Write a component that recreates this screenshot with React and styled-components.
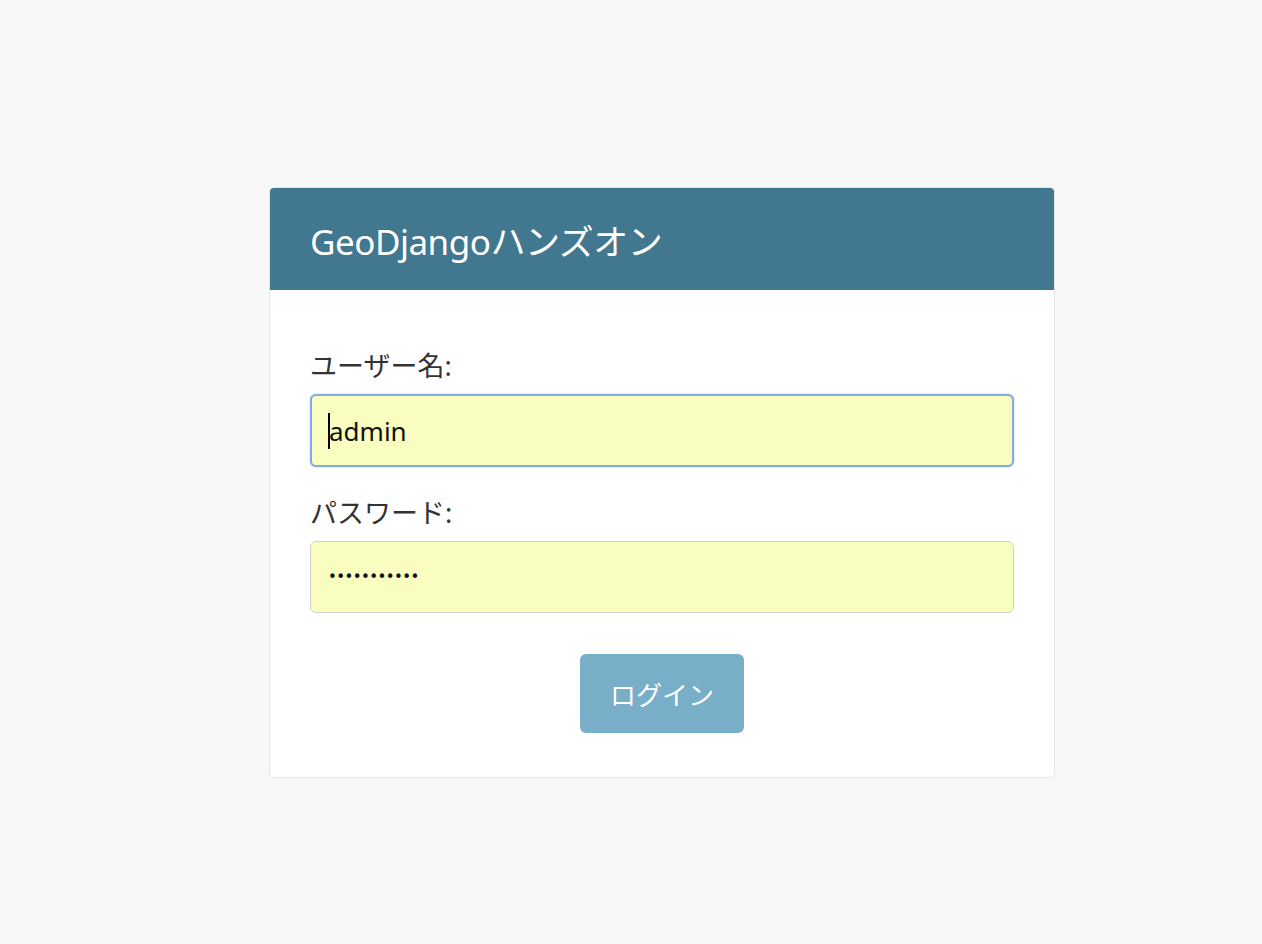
import React from "react";
import styled, { createGlobalStyle } from "styled-components";

const GlobalStyle = createGlobalStyle`
  html, body {
    margin: 0;
    padding: 0;
    background-color: #f8f8f8;
    font-family: "Noto Sans", "Noto Sans CJK JP", sans-serif;
    color: #333;
  }
`;

const Page = styled.div`
  min-height: 944px;
  padding-top: 187px;
  padding-left: 269px;
  box-sizing: border-box;
`;

const Card = styled.div`
  width: 786px;
  box-sizing: border-box;
  background-color: #fff;
  border: 1px solid #e4e4e4;
  border-radius: 5px;
  overflow: hidden;
`;

const Header = styled.div`
  height: 102px;
  display: flex;
  align-items: center;
  padding: 0 40px;
  background-color: #41778f;
  color: #fff;
`;

const Title = styled.h3`
  margin: 0;
  font-size: 35px;
  font-weight: 400;
  letter-spacing: -0.5px;
`;

const Body = styled.form`
  display: flex;
  flex-direction: column;
  padding: 58px 40px 44px;
`;

const Label = styled.label`
  font-size: 27px;
  line-height: 36px;
  color: #333;
  margin-bottom: 10px;
`;

const FieldWrap = styled.div`
  position: relative;
  margin-bottom: ${(p) => p.$gap}px;
`;

const Input = styled.input`
  display: block;
  width: 100%;
  height: ${(p) => (p.$focused ? 73 : 72)}px;
  box-sizing: border-box;
  padding: 0 17px;
  font-family: "Noto Sans", sans-serif;
  font-size: 26px;
  color: #111;
  background-color: #fafdc0;
  border: ${(p) => (p.$focused ? "2px solid #84a9e6" : "1px solid #cfcfcf")};
  border-radius: 6px;
  box-shadow: ${(p) => (p.$focused ? "0 0 2px #a8c4f0" : "none")};
  outline: none;
`;

const Dots = styled.div`
  position: absolute;
  left: 18px;
  top: 50%;
  transform: translateY(-50%);
  font-family: "DejaVu Sans", sans-serif;
  font-size: 15px;
  letter-spacing: -0.6px;
  color: #111;
  pointer-events: none;
`;

const Caret = styled.span`
  position: absolute;
  left: 18px;
  top: 19px;
  width: 2px;
  height: 36px;
  background-color: #000;
`;

const Actions = styled.div`
  display: flex;
  justify-content: center;
`;

const Button = styled.button`
  width: 164px;
  height: 79px;
  border: none;
  border-radius: 6px;
  background-color: #79aec8;
  color: #fff;
  font-family: "Noto Sans CJK JP", sans-serif;
  font-size: 26px;
  cursor: pointer;
`;

const App = () => {
  return (
    <Page>
      <GlobalStyle />
      <Card>
        <Header>
          <Title>GeoDjangoハンズオン</Title>
        </Header>
        <Body onSubmit={(e) => e.preventDefault()}>
          <Label>ユーザー名:</Label>
          <FieldWrap $gap={28}>
            <Input $focused type="text" defaultValue="admin" readOnly />
            <Caret />
          </FieldWrap>
          <Label>パスワード:</Label>
          <FieldWrap $gap={41}>
            <Input type="text" defaultValue="" readOnly />
            <Dots>•••••••••••</Dots>
          </FieldWrap>
          <Actions>
            <Button type="submit">ログイン</Button>
          </Actions>
        </Body>
      </Card>
    </Page>
  );
};

export default App;
